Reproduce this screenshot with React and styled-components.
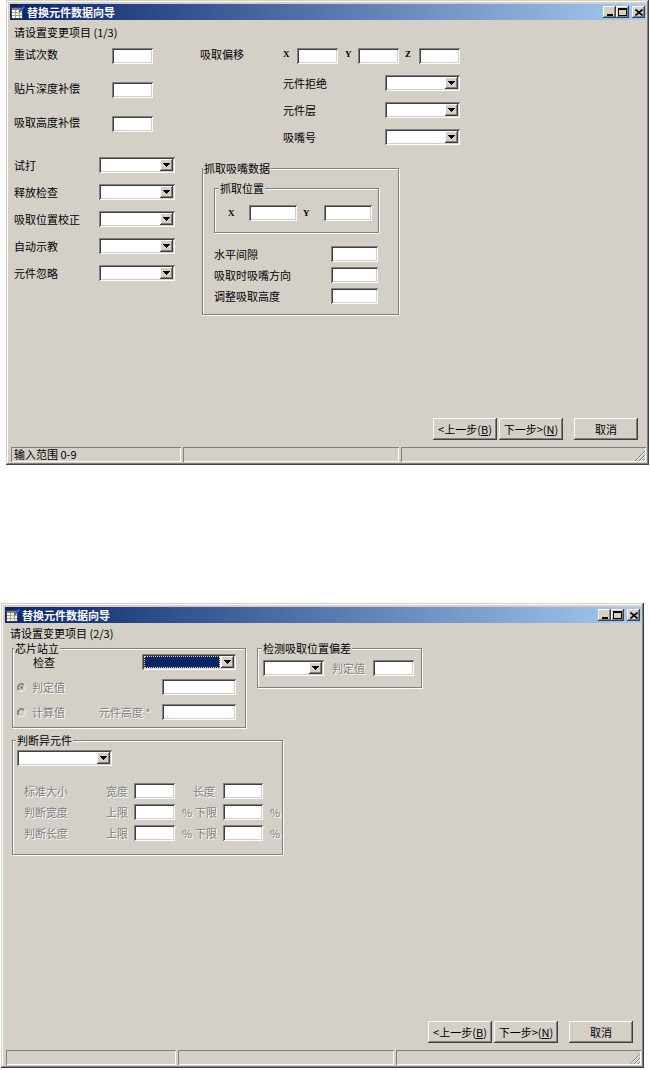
import React from 'react'
import styled, { createGlobalStyle } from 'styled-components'

const GlobalStyle = createGlobalStyle`
  body {
    margin: 0;
    background: #fff;
    font-family: "Noto Sans CJK SC", "Liberation Sans", sans-serif;
    font-size: 11px;
    color: #000;
  }
`

const raised = `box-shadow: inset -1px -1px #404040, inset 1px 1px #fff, inset -2px -2px #808080, inset 2px 2px #d4d0c8;`
const sunken = `box-shadow: inset 1px 1px #808080, inset -1px -1px #fff, inset 2px 2px #404040, inset -2px -2px #d4d0c8;`

const Window = styled.div`
    width: 643px;
    height: 465px;
    box-sizing: border-box;
    margin: ${p => p.$top}px 0 0 ${p => p.$left}px;
    padding: 4px 3px 3px 4px;
    background: #d4d0c8;
    box-shadow: inset -1px -1px #404040, inset 1px 1px #d4d0c8, inset -2px -2px #808080, inset 2px 2px #fff;
    display: flex;
    flex-direction: column;
`

const TitleBar = styled.div`
    height: 16px;
    flex: none;
    display: flex;
    align-items: center;
    padding: 0 1px 0 1px;
    background: linear-gradient(to right, #0a246a, #a6caf0);
    color: #fff;
    font-weight: bold;
    font-size: 11px;
    line-height: 16px;
`

const TitleText = styled.span`
    flex: 1;
    margin-left: 2px;
    white-space: nowrap;
`

const CaptionButton = styled.div`
    width: 13px;
    height: 12px;
    flex: none;
    background: #d4d0c8;
    ${raised}
    margin-left: ${p => p.$ml || 0}px;
    display: flex;
    align-items: center;
    justify-content: center;
`

const Client = styled.div`
    flex: 1;
    min-height: 0;
    display: flex;
    flex-direction: column;
`

const Prompt = styled.div`
    margin: ${p => p.$mt}px 0 0 ${p => p.$ml}px;
    line-height: 12px;
    height: 12px;
    white-space: nowrap;
`

const Body = styled.div`
    flex: 1;
    min-height: 0;
`

const Columns = styled.div`
    display: flex;
    margin-top: 10px;
    padding-left: 4px;
`

const LeftCol = styled.div`
    width: 186px;
    flex: none;
    display: flex;
    flex-direction: column;
`

const RightCol = styled.div`
    display: flex;
    flex-direction: column;
`

const Stack = styled.div`
    display: flex;
    flex-direction: column;
    gap: ${p => p.$gap}px;
    margin-top: ${p => p.$mt || 0}px;
`

const Row = styled.div`
    display: flex;
    align-items: ${p => (p.$top ? 'flex-start' : 'center')};
    height: 16px;
    flex: none;
    padding-left: ${p => p.$pl || 0}px;
    margin-top: ${p => p.$mt || 0}px;
    line-height: 12px;
`

const Label = styled.span`
    width: ${p => (p.$w ? `${p.$w}px` : 'auto')};
    flex: none;
    margin-left: ${p => p.$ml || 0}px;
    padding-left: ${p => p.$pl || 0}px;
    box-sizing: border-box;
    white-space: nowrap;
    color: ${p => (p.$disabled ? '#808080' : '#000')};
    text-shadow: ${p => (p.$disabled ? '1px 1px #fff' : 'none')};
`

const Axis = styled.span`
    width: ${p => p.$w}px;
    flex: none;
    margin-left: ${p => p.$ml || 0}px;
    font-family: "Liberation Serif", serif;
    font-size: 9px;
    font-weight: bold;
`

const Edit = styled.div`
    width: ${p => p.$w}px;
    height: 16px;
    flex: none;
    box-sizing: border-box;
    background: #fff;
    ${sunken}
    margin-left: ${p => p.$ml || 0}px;
`

const ComboBox = styled.div`
    width: ${p => p.$w}px;
    height: 16px;
    flex: none;
    box-sizing: border-box;
    padding: 2px;
    background: #fff;
    ${sunken}
    display: flex;
    justify-content: flex-end;
`

const ComboSelection = styled.div`
    flex: 1;
    margin-right: 1px;
    box-sizing: border-box;
    background: #0a246a;
    border: 1px dotted #e8dc8c;
`

const DropButton = styled.div`
    width: 13px;
    flex: none;
    background: #d4d0c8;
    ${raised}
    display: flex;
    align-items: center;
    justify-content: center;
`

const Group = styled.fieldset`
    margin: ${p => p.$mt || 0}px 0 0 ${p => p.$ml || 0}px;
    padding: 0;
    width: ${p => p.$w}px;
    height: ${p => p.$h}px;
    box-sizing: border-box;
    min-inline-size: 0;
    flex: none;
    border: 1px solid #808080;
    box-shadow: inset 1px 1px #fff, 1px 1px #fff;
`

const Legend = styled.legend`
    margin-left: ${p => p.$ml || 0}px;
    padding: 0 1px;
    line-height: 12px;
    font-size: 11px;
    background: #d4d0c8;
    white-space: nowrap;
`

const GroupRow = styled.div`
    display: flex;
    align-items: flex-start;
    gap: 11px;
    margin-top: 3px;
    padding-left: 7px;
`

const RadioCell = styled.span`
    width: 15px;
    flex: none;
    display: flex;
    align-items: center;
`

const ButtonRow = styled.div`
    display: flex;
    justify-content: flex-end;
    flex: none;
    padding-right: 8px;
    margin-bottom: 7px;
`

const PushButton = styled.button`
    width: 64px;
    height: 22px;
    padding: 0;
    border: none;
    background: #d4d0c8;
    ${raised}
    font: inherit;
    color: #000;
    margin-left: ${p => p.$ml || 0}px;
    white-space: nowrap;
    u { text-decoration: underline; }
`

const StatusBar = styled.div`
    display: flex;
    gap: 2px;
    height: 15px;
    flex: none;
    padding-left: 1px;
`

const StatusPanel = styled.div`
    width: ${p => (p.$w ? `${p.$w}px` : 'auto')};
    flex: ${p => (p.$w ? 'none' : '1')};
    box-sizing: border-box;
    padding-left: 3px;
    line-height: 15px;
    box-shadow: inset 1px 1px #808080, inset -1px -1px #fff;
    display: flex;
    justify-content: space-between;
    align-items: flex-end;
    white-space: nowrap;
`

const AppIcon = () => (
    <svg width="14" height="13" viewBox="0 0 14 13" shapeRendering="crispEdges">
        <rect x="0.5" y="1.5" width="11" height="11" fill="#fff" stroke="#404040" />
        <rect x="1" y="2" width="10" height="2" fill="#808080" />
        <path d="M1 6.5h10M1 9.5h10M4.5 4v8M8.5 4v8" stroke="#a0a0a0" />
        <path d="M13.5 0.5L8 6" stroke="#3060e8" strokeWidth="2" shapeRendering="auto" />
        <path d="M8 6l-1.5 1.5" stroke="#f0d040" strokeWidth="2" shapeRendering="auto" />
    </svg>
)

const MinGlyph = () => (
    <svg width="8" height="7" shapeRendering="crispEdges">
        <rect x="1" y="5" width="6" height="2" fill="#000" />
    </svg>
)

const MaxGlyph = () => (
    <svg width="9" height="8" shapeRendering="crispEdges">
        <rect x="0.5" y="0.5" width="8" height="7" fill="none" stroke="#000" />
        <rect x="0" y="1" width="9" height="1" fill="#000" />
    </svg>
)

const CloseGlyph = () => (
    <svg width="8" height="7" viewBox="0 0 8 7">
        <path d="M0.5 0.5L7.5 6.5M7.5 0.5L0.5 6.5" stroke="#000" strokeWidth="1.6" />
    </svg>
)

const Arrow = () => (
    <svg width="7" height="4" shapeRendering="crispEdges">
        <rect x="0" y="0" width="7" height="1" fill="#000" />
        <rect x="1" y="1" width="5" height="1" fill="#000" />
        <rect x="2" y="2" width="3" height="1" fill="#000" />
        <rect x="3" y="3" width="1" height="1" fill="#000" />
    </svg>
)

const Grip = () => (
    <svg width="12" height="12" viewBox="0 0 12 12" shapeRendering="crispEdges">
        <path d="M11 1L1 11M11 5L5 11M11 9L9 11" stroke="#808080" />
        <path d="M11 2L2 11M11 6L6 11M11 10L10 11" stroke="#fff" />
    </svg>
)

const Radio = ({ checked }) => (
    <svg width="9" height="9" viewBox="0 0 12 12">
        <circle cx="6" cy="6" r="5.5" fill="#d4d0c8" />
        <path d="M10 2A5.5 5.5 0 0 0 2 10" fill="none" stroke="#808080" strokeWidth="1" />
        <path d="M2 10A5.5 5.5 0 0 0 10 2" fill="none" stroke="#fff" strokeWidth="1" />
        <path d="M9.2 2.8A4.5 4.5 0 0 0 2.8 9.2" fill="none" stroke="#404040" strokeWidth="1" />
        {checked && <circle cx="6" cy="6" r="2" fill="#808080" />}
    </svg>
)

function Combo({ w, selected }) {
    return (
        <ComboBox $w={w}>
            {selected && <ComboSelection />}
            <DropButton><Arrow /></DropButton>
        </ComboBox>
    )
}

function Frame({ top, left, children, status }) {
    return (
        <Window $top={top} $left={left}>
            <TitleBar>
                <AppIcon />
                <TitleText>替换元件数据向导</TitleText>
                <CaptionButton><MinGlyph /></CaptionButton>
                <CaptionButton><MaxGlyph /></CaptionButton>
                <CaptionButton $ml={3}><CloseGlyph /></CaptionButton>
            </TitleBar>
            <Client>
                {children}
                <ButtonRow>
                    <PushButton>&lt;上一步(<u>B</u>)</PushButton>
                    <PushButton $ml={2}>下一步&gt;(<u>N</u>)</PushButton>
                    <PushButton $ml={11}>取消</PushButton>
                </ButtonRow>
                <StatusBar>
                    <StatusPanel $w={170}>{status}</StatusPanel>
                    <StatusPanel $w={216} />
                    <StatusPanel><span /><Grip /></StatusPanel>
                </StatusBar>
            </Client>
        </Window>
    )
}

function StepOne() {
    return (
        <Body>
            <Prompt $mt={6} $ml={4}>请设置变更项目 (1/3)</Prompt>
            <Columns>
                <LeftCol>
                    <Stack $gap={18}>
                        <Row $top><Label $w={98}>重试次数</Label><Edit $w={41} /></Row>
                        <Row $top><Label $w={98}>贴片深度补偿</Label><Edit $w={41} /></Row>
                        <Row $top><Label $w={98}>吸取高度补偿</Label><Edit $w={41} /></Row>
                    </Stack>
                    <Stack $gap={11} $mt={25}>
                        <Row><Label $w={85}>试打</Label><Combo w={76} /></Row>
                        <Row><Label $w={85}>释放检查</Label><Combo w={76} /></Row>
                        <Row><Label $w={85}>吸取位置校正</Label><Combo w={76} /></Row>
                        <Row><Label $w={85}>自动示教</Label><Combo w={76} /></Row>
                        <Row><Label $w={85}>元件忽略</Label><Combo w={76} /></Row>
                    </Stack>
                </LeftCol>
                <RightCol>
                    <Row $top>
                        <Label $w={83}>吸取偏移</Label>
                        <Axis $w={14}>X</Axis><Edit $w={41} />
                        <Axis $w={13} $ml={7}>Y</Axis><Edit $w={41} />
                        <Axis $w={14} $ml={6}>Z</Axis><Edit $w={41} />
                    </Row>
                    <Stack $gap={11} $mt={11}>
                        <Row $pl={83}><Label $w={102}>元件拒绝</Label><Combo w={75} /></Row>
                        <Row $pl={83}><Label $w={102}>元件层</Label><Combo w={75} /></Row>
                        <Row $pl={83}><Label $w={102}>吸嘴号</Label><Combo w={75} /></Row>
                    </Stack>
                    <Group $mt={17} $ml={2} $w={197} $h={153}>
                        <Legend>抓取吸嘴数据</Legend>
                        <Group $mt={8} $ml={11} $w={165} $h={51}>
                            <Legend $ml={4}>抓取位置</Legend>
                            <Row $mt={11} $pl={13}>
                                <Axis $w={21}>X</Axis><Edit $w={48} />
                                <Axis $w={21} $ml={6}>Y</Axis><Edit $w={48} />
                            </Row>
                        </Group>
                        <Stack $gap={5} $mt={13}>
                            <Row $pl={11}><Label $w={117}>水平间隙</Label><Edit $w={47} /></Row>
                            <Row $pl={11}><Label $w={117}>吸取时吸嘴方向</Label><Edit $w={47} /></Row>
                            <Row $pl={11}><Label $w={117}>调整吸取高度</Label><Edit $w={47} /></Row>
                        </Stack>
                    </Group>
                </RightCol>
            </Columns>
        </Body>
    )
}

function LimitRow({ name, a, b, pct, mt }) {
    return (
        <Row $pl={11} $mt={mt}>
            <Label $w={82} $disabled>{name}</Label>
            <Label $w={28} $disabled>{a}</Label>
            <Edit $w={41} />
            <Label $w={18} $pl={7} $disabled>{pct ? '%' : ''}</Label>
            <Label $w={30} $pl={pct ? 2 : 0} $disabled>{b}</Label>
            <Edit $w={40} />
            <Label $pl={7} $disabled>{pct ? '%' : ''}</Label>
        </Row>
    )
}

function StepTwo() {
    return (
        <Body>
            <Prompt $mt={4} $ml={5}>请设置变更项目 (2/3)</Prompt>
            <GroupRow>
                <Group $w={234} $h={86}>
                    <Legend $ml={1}>芯片站立</Legend>
                    <Row $pl={20}><Label $w={109}>检查</Label><Combo w={94} selected /></Row>
                    <Row $pl={4} $mt={9}>
                        <RadioCell><Radio checked /></RadioCell>
                        <Label $w={130} $disabled>判定值</Label>
                        <Edit $w={74} />
                    </Row>
                    <Row $pl={4} $mt={9}>
                        <RadioCell><Radio /></RadioCell>
                        <Label $w={67} $disabled>计算值</Label>
                        <Label $w={63} $disabled>元件高度 *</Label>
                        <Edit $w={74} />
                    </Row>
                </Group>
                <Group $w={165} $h={46}>
                    <Legend $ml={4}>检测吸取位置偏差</Legend>
                    <Row $pl={5} $mt={6}>
                        <Combo w={61} />
                        <Label $w={41} $ml={8} $disabled>判定值</Label>
                        <Edit $w={41} />
                    </Row>
                </Group>
            </GroupRow>
            <Group $mt={6} $ml={7} $w={271} $h={121}>
                <Legend $ml={3}>判断异元件</Legend>
                <Row $pl={4} $mt={4}><Combo w={95} /></Row>
                <LimitRow name="标准大小" a="宽度" b="长度" mt={17} />
                <LimitRow name="判断宽度" a="上限" b="下限" pct mt={5} />
                <LimitRow name="判断长度" a="上限" b="下限" pct mt={5} />
            </Group>
        </Body>
    )
}

export default function App() {
    return (
        <>
            <GlobalStyle />
            <Frame top={0} left={6} status="输入范围 0-9">
                <StepOne />
            </Frame>
            <Frame top={138} left={1}>
                <StepTwo />
            </Frame>
        </>
    )
}
